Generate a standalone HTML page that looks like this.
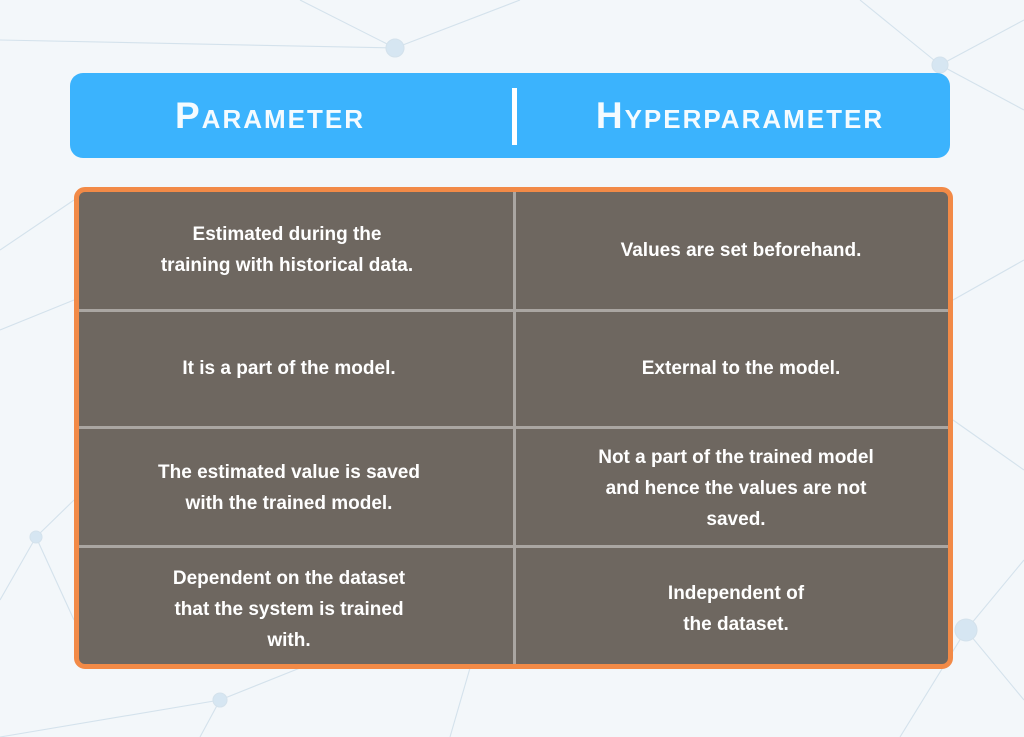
<!DOCTYPE html>
<html><head><style>
*{margin:0;padding:0;box-sizing:border-box}
body{width:1024px;height:737px;overflow:hidden;background:#f3f7fa;position:relative;font-family:"Liberation Sans",sans-serif}
svg.bg{position:absolute;left:0;top:0}
.hdr{position:absolute;left:70px;top:73px;width:880px;height:85px;background:#3bb3fd;border-radius:13px}
.hdr div{position:absolute;top:0;height:85px;line-height:85px;color:#f4fbff;font-weight:bold;font-variant:small-caps;font-size:37px;letter-spacing:2px;text-align:center}
.bar{position:absolute;left:442px;top:15px;width:5px;height:57px;background:#fff}
.tbl{position:absolute;left:74px;top:187px;width:879px;height:482px;border:5px solid #f28a47;border-radius:11px;background:#6e6760;overflow:hidden}
.v{position:absolute;left:434px;top:0;width:3px;height:100%;background:#aaa6a2}
.h{position:absolute;left:0;width:100%;height:3px;background:#aaa6a2}
.c{position:absolute;color:#fff;font-weight:bold;font-size:19px;line-height:31px;text-align:center;display:flex;align-items:center;justify-content:center}
</style></head><body>
<svg class="bg" width="1024" height="737" stroke="#d4e2ec" stroke-width="1.1" fill="none">
<line x1="0" y1="40" x2="395" y2="48"/><line x1="395" y1="48" x2="300" y2="0"/><line x1="395" y1="48" x2="520" y2="0"/><line x1="940" y1="65" x2="1024" y2="20"/><line x1="940" y1="65" x2="860" y2="0"/><line x1="940" y1="65" x2="1024" y2="110"/>
<line x1="0" y1="250" x2="74" y2="200"/><line x1="0" y1="330" x2="74" y2="300"/><line x1="36" y1="537" x2="0" y2="600"/><line x1="36" y1="537" x2="74" y2="500"/><line x1="36" y1="537" x2="74" y2="620"/>
<line x1="220" y1="700" x2="0" y2="737"/><line x1="220" y1="700" x2="300" y2="668"/><line x1="220" y1="700" x2="200" y2="737"/><line x1="450" y1="737" x2="470" y2="668"/><line x1="966" y1="630" x2="1024" y2="560"/><line x1="966" y1="630" x2="1024" y2="700"/><line x1="966" y1="630" x2="900" y2="737"/><line x1="953" y1="300" x2="1024" y2="260"/><line x1="953" y1="420" x2="1024" y2="470"/>
<circle cx="395" cy="48" r="9" fill="#d6e6f2"/><circle cx="940" cy="65" r="8" fill="#d6e6f2"/><circle cx="36" cy="537" r="6" fill="#d6e6f2"/><circle cx="220" cy="700" r="7" fill="#d6e6f2"/><circle cx="966" cy="630" r="11" fill="#d6e6f2"/>
</svg>
<div class="hdr"><div style="left:0;width:400px">Parameter</div><span class="bar"></span><div style="left:470px;width:400px">Hyperparameter</div></div>
<div class="tbl">
<div class="v"></div>
<div class="h" style="top:117px"></div><div class="h" style="top:234px"></div><div class="h" style="top:353px"></div>
<div class="c" style="left:0;width:416px;top:26px;height:64px">Estimated during the<br>training with historical data.</div>
<div class="c" style="left:437px;width:450px;top:38px;height:40px">Values are set beforehand.</div>
<div class="c" style="left:0;width:420px;top:156px;height:40px">It is a part of the model.</div>
<div class="c" style="left:437px;width:450px;top:156px;height:40px">External to the model.</div>
<div class="c" style="left:0;width:420px;top:264px;height:64px">The estimated value is saved<br>with the trained model.</div>
<div class="c" style="left:437px;width:440px;top:248px;height:96px">Not a part of the trained model<br>and hence the values are not<br>saved.</div>
<div class="c" style="left:0;width:420px;top:369px;height:96px">Dependent on the dataset<br>that the system is trained<br>with.</div>
<div class="c" style="left:437px;width:440px;top:385px;height:64px">Independent of<br>the dataset.</div>
</div>
</body></html>
